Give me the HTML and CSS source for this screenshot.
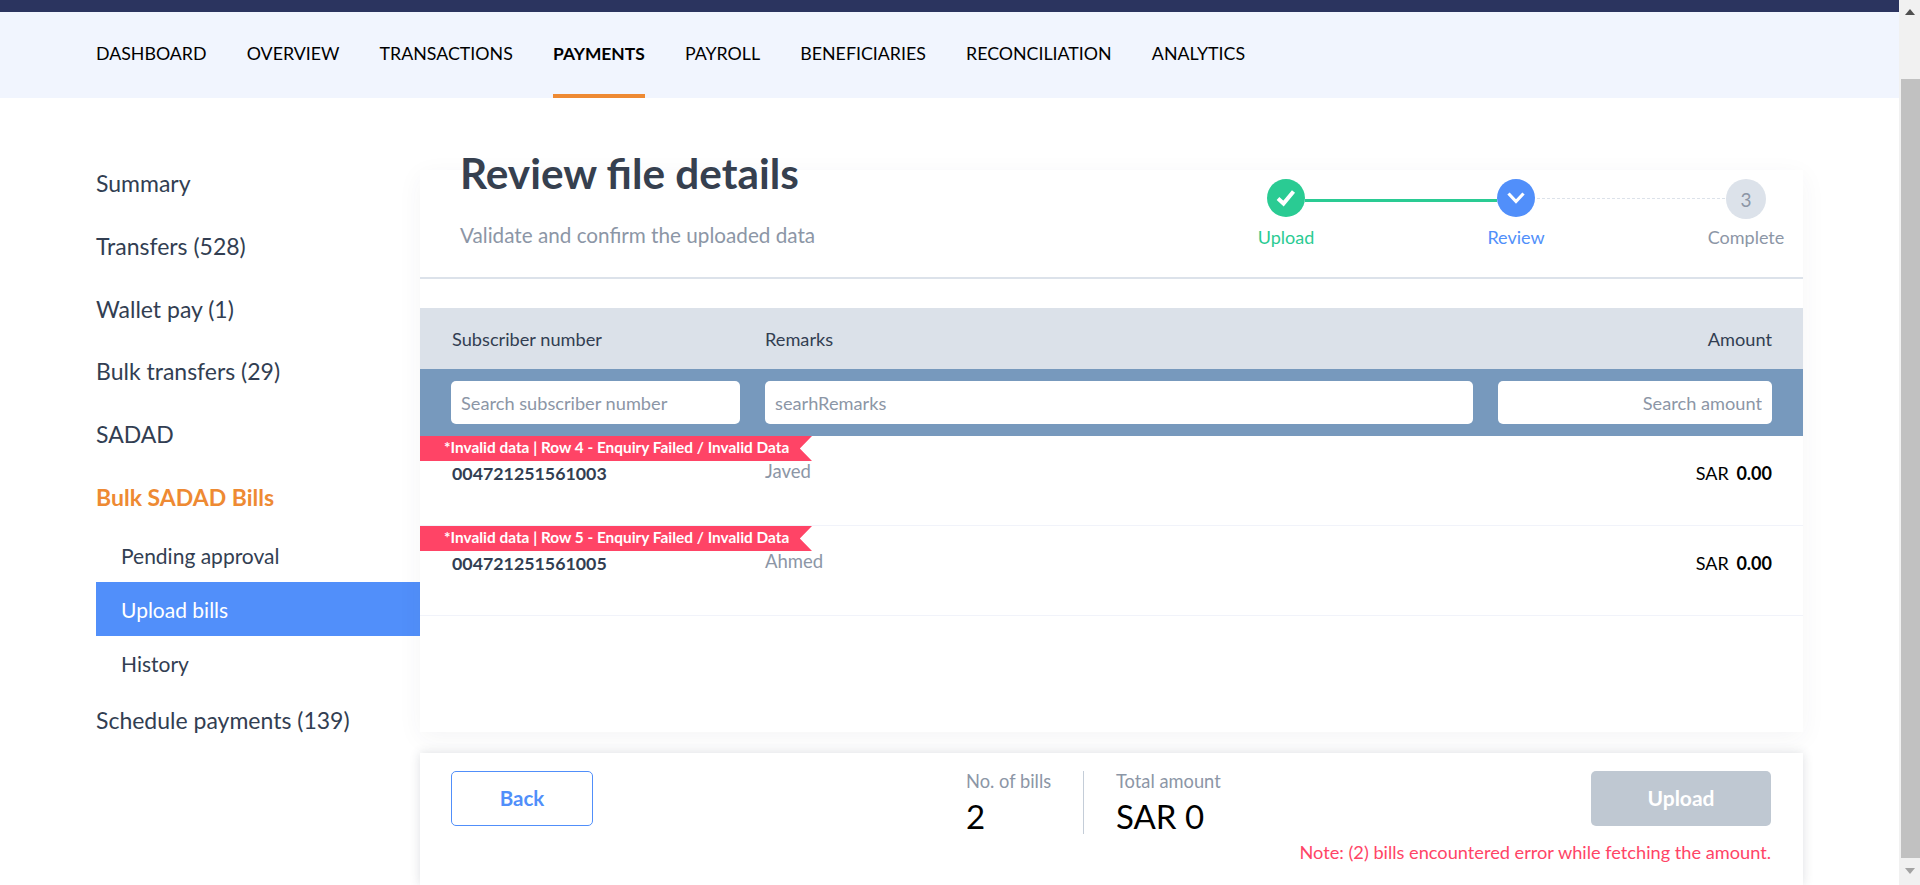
FILE: index.html
```html
<!DOCTYPE html>
<html lang="en">
<head>
    <meta charset="UTF-8">
    <meta name="viewport" content="width=device-width, initial-scale=1.0">
    <title>Review file details</title>
    <link rel="stylesheet" href="styles.css">
</head>
<body>
    <div class="page">
        <div class="top-strip"></div>
        <nav class="main-nav">
            <a href="#">DASHBOARD</a>
            <a href="#">OVERVIEW</a>
            <a href="#">TRANSACTIONS</a>
            <a href="#" class="active">PAYMENTS</a>
            <a href="#">PAYROLL</a>
            <a href="#">BENEFICIARIES</a>
            <a href="#">RECONCILIATION</a>
            <a href="#">ANALYTICS</a>
        </nav>
        <div class="layout">
            <aside class="side-menu">
                <a href="#" class="side-item">Summary</a>
                <a href="#" class="side-item">Transfers (528)</a>
                <a href="#" class="side-item">Wallet pay (1)</a>
                <a href="#" class="side-item">Bulk transfers (29)</a>
                <a href="#" class="side-item">SADAD</a>
                <a href="#" class="side-item current">Bulk SADAD Bills</a>
                <div class="side-sub">
                    <a href="#">Pending approval</a>
                    <a href="#" class="current">Upload bills</a>
                    <a href="#">History</a>
                </div>
                <a href="#" class="side-item">Schedule payments (139)</a>
            </aside>
            <main class="content">
                <section class="review-card">
                    <header class="review-head">
                        <div class="review-title">
                            <h1>Review file details</h1>
                            <p>Validate and confirm the uploaded data</p>
                        </div>
                        <ol class="stepper">
                            <li class="step done">
                                <span class="step-dot">
                                    <svg width="22" height="20" viewBox="0 0 22 20"><path d="M3 10.500l5.500 5L18.500 3.500" fill="none" stroke="#fff" stroke-width="4"/></svg>
                                </span>
                                <span class="step-label">Upload</span>
                            </li>
                            <li class="step now">
                                <span class="step-dot">
                                    <svg width="20" height="14" viewBox="0 0 20 14"><path d="M2.500 2.500l7.500 8 7.500-8" fill="none" stroke="#fff" stroke-width="3.200"/></svg>
                                </span>
                                <span class="step-label">Review</span>
                            </li>
                            <li class="step todo">
                                <span class="step-dot">3</span>
                                <span class="step-label">Complete</span>
                            </li>
                        </ol>
                    </header>
                    <div class="table-head tbl-row">
                        <div>Subscriber number</div>
                        <div>Remarks</div>
                        <div class="right">Amount</div>
                    </div>
                    <div class="table-search tbl-row">
                        <input type="text" placeholder="Search subscriber number">
                        <input type="text" placeholder="searhRemarks">
                        <input type="text" class="right" placeholder="Search amount">
                    </div>
                    <div class="bill-row">
                        <div class="ribbon">*Invalid data | Row 4 - Enquiry Failed / Invalid Data</div>
                        <div class="tbl-row">
                            <div class="sub-no">004721251561003</div>
                            <div class="remark">Javed</div>
                            <div class="amount">SAR <b>0.00</b></div>
                        </div>
                    </div>
                    <div class="bill-row">
                        <div class="ribbon">*Invalid data | Row 5 - Enquiry Failed / Invalid Data</div>
                        <div class="tbl-row">
                            <div class="sub-no">004721251561005</div>
                            <div class="remark">Ahmed</div>
                            <div class="amount">SAR <b>0.00</b></div>
                        </div>
                    </div>
                </section>
                <footer class="action-bar">
                    <button class="btn-back">Back</button>
                    <div class="totals">
                        <div class="total-box">
                            <span>No. of bills</span>
                            <strong>2</strong>
                        </div>
                        <div class="total-box">
                            <span>Total amount</span>
                            <strong>SAR 0</strong>
                        </div>
                    </div>
                    <div class="action-right">
                        <button class="btn-upload" disabled>Upload</button>
                        <p class="note">Note: (2) bills encountered error while fetching the amount.</p>
                    </div>
                </footer>
            </main>
        </div>
    </div>
    <div class="scroll-rail">
        <span class="arrow up"></span>
        <span class="thumb"></span>
        <span class="arrow down"></span>
    </div>
</body>
</html>
```

FILE: styles.css
```css
* {
    box-sizing: border-box;
}
html, body {
    height: 100%;
}
body {
    font-family: Lato, "Noto Sans", sans-serif;
    display: flex;
    margin: 0;
    overflow: hidden;
    background-color: #fff;
    color: #323e52;
}
a {
    color: inherit;
    text-decoration: none;
}
.page {
    flex: 1;
    min-width: 0;
    height: 885px;
    overflow: hidden;
}
.top-strip {
    height: 12px;
    background-color: #2b345f;
}
.main-nav {
    display: flex;
    gap: 40.2px;
    height: 86px;
    padding-left: 96px;
    background-color: #f1f5fe;
}
.main-nav a {
    display: flex;
    align-items: center;
    height: 100%;
    font-size: 17.8px;
    color: #000;
    border-bottom: 4px solid transparent;
}
.main-nav a.active {
    font-size: 17.4px;
    font-weight: 700;
    border-bottom-color: #ee8a33;
}
.layout {
    display: flex;
}
.side-menu {
    width: 420px;
    flex: none;
    padding: 54px 0 0 96px;
}
.side-item {
    display: flex;
    align-items: center;
    height: 62.7px;
    font-size: 23px;
}
.side-item.current {
    color: #ee8a33;
    font-weight: 700;
}
.side-sub {
    margin-bottom: -1px;
}
.side-sub a {
    display: flex;
    align-items: center;
    height: 54px;
    padding-left: 25px;
    font-size: 21px;
}
.side-sub a.current {
    background-color: #518ffa;
    color: #fff;
}
.content {
    width: 1383px;
    flex: none;
}
.review-card {
    height: 562px;
    margin-top: 72px;
    background-color: #fff;
    box-shadow: 0 6px 24px rgba(50, 62, 82, 0.05);
}
.review-head {
    display: flex;
    justify-content: space-between;
    height: 109px;
    border-bottom: 2px solid #dce2ea;
}
.review-title {
    margin-top: -25px;
    padding-left: 40px;
}
.review-title h1 {
    margin: 0;
    font-size: 42.3px;
    line-height: 56px;
    font-weight: 700;
    color: #36404f;
}
.review-title p {
    margin: 20px 0 0;
    font-size: 20.7px;
    line-height: 28px;
    color: #8c96a6;
}
.stepper {
    display: flex;
    width: 690px;
    margin: 9px -58px 0 0;
    padding: 0;
    list-style: none;
}
.step {
    position: relative;
    display: flex;
    flex-direction: column;
    align-items: center;
    width: 230px;
}
.step-dot {
    display: flex;
    align-items: center;
    justify-content: center;
    width: 38px;
    height: 38px;
    border-radius: 50%;
}
.done .step-dot {
    background-color: #2acb93;
}
.now .step-dot {
    background-color: #518ffa;
}
.todo .step-dot {
    width: 40px;
    height: 40px;
    margin-bottom: -2px;
    background-color: #dce2ea;
    color: #8c96a6;
    font-size: 19px;
}
.step-label {
    margin-top: 7px;
    font-size: 18px;
    line-height: 26px;
}
.done .step-label {
    color: #2acb93;
}
.now .step-label {
    color: #518ffa;
}
.todo .step-label {
    color: #8c96a6;
}
.done::after {
    content: "";
    position: absolute;
    top: 20px;
    left: 134px;
    width: 192px;
    height: 3px;
    background-color: #2acb93;
}
.now::after {
    content: "";
    position: absolute;
    top: 19px;
    left: 136px;
    width: 188px;
    border-top: 1px dashed #dce2ea;
}
.tbl-row {
    display: grid;
    grid-template-columns: 289px 1fr 274px;
    column-gap: 25px;
    padding: 0 31px 0 31px;
}
.table-head {
    grid-template-columns: 288px 1fr 274px;
    align-items: center;
    height: 61px;
    margin-top: 29px;
    padding-left: 32px;
    background-color: #dbe1e9;
    font-size: 18.2px;
}
.table-search {
    align-items: center;
    height: 67px;
    background-color: #7799bd;
}
.table-search input {
    height: 43px;
    width: 100%;
    padding: 0 10px;
    border: 0;
    border-radius: 5px;
    background-color: #fff;
    font-family: inherit;
    font-size: 18.2px;
}
.table-search input::placeholder {
    color: #8c96a6;
    opacity: 1;
}
.right {
    text-align: right;
}
.bill-row {
    height: 90px;
    border-bottom: 1px solid #f1f3fa;
}
.ribbon {
    width: 392px;
    height: 25px;
    padding-left: 24px;
    background-color: #ff4466;
    clip-path: polygon(0 0, 100% 0, 96.9% 50%, 100% 100%, 0 100%);
    color: #fff;
    font-size: 15.4px;
    font-weight: 700;
    line-height: 23px;
    white-space: nowrap;
}
.sub-no {
    padding-left: 1px;
    font-size: 17.8px;
    font-weight: 700;
    line-height: 24px;
}
.remark {
    font-size: 18.5px;
    line-height: 24px;
    margin-top: -2px;
    color: #8c96a6;
}
.amount {
    font-size: 18px;
    line-height: 24px;
    text-align: right;
    color: #000;
}
.amount b {
    margin-left: 3px;
}
.action-bar {
    display: flex;
    align-items: flex-start;
    height: 132px;
    margin-top: 21px;
    padding: 18px 32px 0 31px;
    background-color: #fff;
    box-shadow: 0 0 10px rgba(50, 62, 82, 0.16);
}
.btn-back {
    width: 142px;
    height: 55px;
    padding: 0 0 2px;
    border: 1px solid #518ffa;
    border-radius: 5px;
    background-color: #fff;
    color: #518ffa;
    font-family: inherit;
    font-size: 20.5px;
    font-weight: 700;
}
.totals {
    display: flex;
    margin-left: 373px;
}
.total-box {
    display: flex;
    flex-direction: column;
    height: 63px;
}
.total-box:first-child {
    width: 118px;
    border-right: 1px solid #c4cdd8;
}
.total-box:last-child {
    padding-left: 32px;
}
.total-box span {
    font-size: 18.3px;
    line-height: 20px;
    color: #8c96a6;
}
.total-box strong {
    margin-top: 5px;
    font-size: 33px;
    line-height: 40px;
    font-weight: 400;
    color: #000;
}
.action-right {
    display: flex;
    flex-direction: column;
    align-items: flex-end;
    margin-left: auto;
}
.btn-upload {
    width: 180px;
    height: 55px;
    padding: 0 0 2px;
    border: 0;
    border-radius: 5px;
    background-color: #bfc8d2;
    color: #fff;
    font-family: inherit;
    font-size: 21px;
    font-weight: 700;
}
.note {
    margin: 13px 0 0;
    font-size: 18.2px;
    line-height: 26px;
    color: #ff4466;
    white-space: nowrap;
}
.scroll-rail {
    display: flex;
    flex-direction: column;
    align-items: center;
    flex: none;
    width: 21px;
    height: 885px;
    background-color: #f1f1f1;
}
.thumb {
    width: 19px;
    height: 779px;
    margin: 64px 0 10px 2px;
    background-color: #c1c1c1;
}
.arrow {
    width: 0;
    height: 0;
    border-left: 5px solid transparent;
    border-right: 5px solid transparent;
}
.arrow.up {
    margin-top: 9px;
    border-bottom: 6px solid #505050;
}
.arrow.down {
    border-top: 6px solid #a3a3a3;
}
```
